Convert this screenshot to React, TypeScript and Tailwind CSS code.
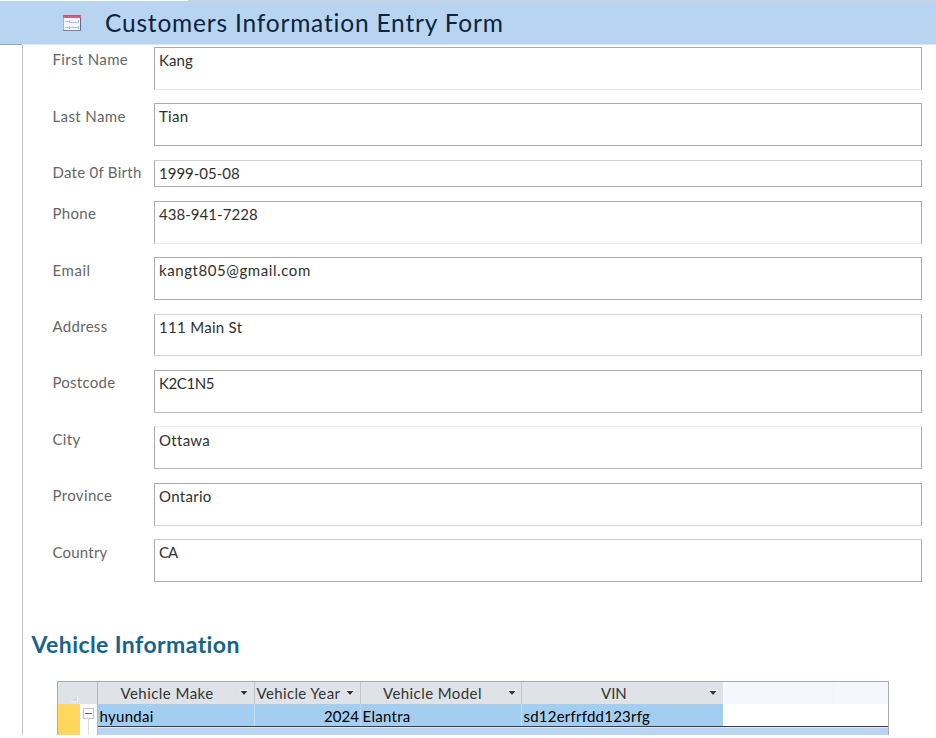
const fields = [
  { label: 'First Name', value: 'Kang', row: 'h-[56px]', box: 'h-[43px] pt-[3px]', ls: 'pt-[3px] tracking-[0.35px]', vs: 'tracking-[0.1px]', edge: 'border-b-[#e6e6e6]' },
  { label: 'Last Name', value: 'Tian', row: 'h-[57px]', box: 'h-[43px] pt-[3px]', ls: 'pt-[4px] tracking-[0.4px]', vs: 'tracking-[0.3px]', edge: 'border-b-[#ababab]' },
  { label: 'Date 0f Birth', value: '1999-05-08', row: 'h-[41px]', box: 'h-[27px] pt-[3px]', ls: 'pt-[3px] tracking-[0.27px]', vs: 'tracking-[0px]', edge: 'border-t-[#cfcfcf]' },
  { label: 'Phone', value: '438-941-7228', row: 'h-[56px]', box: 'h-[43px] pt-[3px]', ls: 'pt-[3px] tracking-[0.3px]', vs: 'tracking-[0.04px]', edge: 'border-b-[#e9e9e9]' },
  { label: 'Email', value: 'kangt805@gmail.com', row: 'h-[57px]', box: 'h-[43px] pt-[3px]', ls: 'pt-[4px] tracking-[0.55px]', vs: 'tracking-[0.58px]', edge: 'border-b-[#ababab]' },
  { label: 'Address', value: '111 Main St', row: 'h-[56px]', box: 'h-[42px] pt-[3px]', ls: 'pt-[3px] tracking-[0.3px]', vs: 'tracking-[0.3px]', edge: 'border-t-[#d6d6d6] border-b-[#d6d6d6]' },
  { label: 'Postcode', value: 'K2C1N5', row: 'h-[56px]', box: 'h-[43px] pt-[3px]', ls: 'pt-[3px] tracking-[0.25px]', vs: 'tracking-[-0.4px]', edge: 'border-b-[#bdbdbd]' },
  { label: 'City', value: 'Ottawa', row: 'h-[57px]', box: 'h-[43px] pt-[4px]', ls: 'pt-[4px] tracking-[0.35px]', vs: 'tracking-[0.3px]', edge: 'border-t-[#eeeeee] border-b-[#b5b5b5]' },
  { label: 'Province', value: 'Ontario', row: 'h-[56px]', box: 'h-[43px] pt-[3px]', ls: 'pt-[3px] tracking-[0.35px]', vs: 'tracking-[0.3px]', edge: 'border-b-[#d6d6d6]' },
  { label: 'Country', value: 'CA', row: 'h-[56px]', box: 'h-[43px] pt-[3px]', ls: 'pt-[4px] tracking-[0.2px]', vs: 'tracking-[-1px]', edge: 'border-t-[#c8c8c8]' },
];

function FormIcon() {
  return (
    <svg width="19" height="18" viewBox="0 0 19 18" shapeRendering="crispEdges">
      <rect x="0" y="0" width="18" height="16" fill="#a9b3c6" />
      <rect x="17" y="1" width="1" height="15" fill="#5a6c89" />
      <rect x="0" y="15" width="18" height="1" fill="#7987a0" />
      <rect x="1" y="3" width="16" height="12" fill="#f4f5f9" />
      <rect x="0" y="0" width="18" height="3" fill="#cc6480" />
      <rect x="1" y="0" width="16" height="1" fill="#b95a76" />
      <path d="M2 6.5h4M2 12.5h4M6.5 5v3M6 7.5h10M15.5 5v3M6.5 11v3M6 12.5h10M15.5 11v3" fill="none" stroke="#b0c4df" />
    </svg>
  );
}

function Arrow() {
  return (
    <svg className="shrink-0" width="10" height="6" viewBox="0 0 10 6">
      <path d="M0 0h10L5 6z" fill="#f8f9fb" />
      <path d="M1.5 1h7L5 5z" fill="#303640" />
    </svg>
  );
}

const columns = [
  { name: 'Vehicle Make', cell: 'w-[157px] border-r pl-[22.5px] pr-[5px]', ls: 'tracking-[0.45px]' },
  { name: 'Vehicle Year', cell: 'w-[106px] border-r pl-[1.5px] pr-[5px]', ls: 'tracking-[0.37px]' },
  { name: 'Vehicle Model', cell: 'w-[161px] border-r pl-[22px] pr-[4px]', ls: 'tracking-[0.42px]' },
  { name: 'VIN', cell: 'w-[201px] pl-[79px] pr-[5px]', ls: 'tracking-[0px]' },
];

export default function App() {
  return (
    <div className="flex h-[738px] w-[936px] flex-col overflow-hidden bg-white font-[Lato,'Open_Sans',sans-serif] text-[15px] whitespace-nowrap">
      <div className="flex h-px bg-[#d4d0d0]"><div className="w-[188px] bg-white" /></div>
      <header className="flex h-[43px] items-center bg-[#b8d4f1] pl-[63px]">
        <div className="flex w-[42px] pt-[3px]"><FormIcon /></div>
        <h1 className="text-[24.5px] leading-[30px] tracking-[0.81px] text-[#0b2440]">Customers Information Entry Form</h1>
      </header>
      <div className="flex h-px bg-[#d6e7f7]"><div className="w-[22px] bg-[#8ba9cc]" /></div>
      <div className="flex h-[690px]">
        <div className="w-[23px] shrink-0 border-r border-[#c3c3c3]" />
        <main className="min-w-0 flex-1 pt-[2px]">
          <div>
            {fields.map((f) => (
              <div key={f.label} className={`flex items-start ${f.row}`}>
                <label className={`w-[131px] shrink-0 pl-[29.5px] leading-[18px] text-[#666666] ${f.ls}`}>{f.label}</label>
                <div className={`w-[768px] border border-[#ababab] pl-[4px] leading-[18px] text-[#303030] ${f.edge} ${f.box} ${f.vs}`}>{f.value}</div>
              </div>
            ))}
          </div>
          <h2 className="mt-[34px] h-[52px] pl-[8.5px] text-[23px] leading-[30px] font-bold tracking-[0.42px] text-[#17638a]">Vehicle Information</h2>
          <section className="ml-[34px] h-[54px] w-[832px] border-t border-r border-l border-[#ababab] text-[#333333]">
            <div className="flex h-[22px] bg-[#f6f7fe]">
              <div className="flex w-[40px] items-end justify-end border-r border-[#b5b8bc] bg-[#dfe3e8] pr-[19px] pb-[2px]">
                <svg width="7" height="6"><path d="M0 6L7 0v6z" fill="#d0dae7" /><path d="M0 5.5h6.5V0" fill="none" stroke="#eef3f9" /></svg>
              </div>
              {columns.map((c) => (
                <div key={c.name} className={`flex items-center justify-between border-[#c1c5ca] bg-[#dfe3e8] ${c.cell} ${c.ls}`}>
                  <span className="leading-[20px]">{c.name}</span>
                  <Arrow />
                </div>
              ))}
              <div className="ml-[110px] w-px bg-[#f1f3fa]" />
            </div>
            <div className="flex h-[31px]">
              <div className="w-[22px] bg-[#ffd75e]" />
              <div className="flex w-[18px] flex-col items-center border-r border-[#b5b8bc] pt-[4px] pr-px pl-px">
                <div className="flex h-[11px] w-[11px] shrink-0 items-center justify-center border border-[#c0c3c8] bg-white"><div className="h-px w-[7px] bg-[#666666]" /></div>
                <div className="w-px flex-1 bg-[#dedede]" />
              </div>
              <div className="flex flex-1 flex-col">
                <div className="flex h-[22px] leading-[24px] text-black">
                  <div className="w-[157px] border-r border-[#c3def2] bg-[#a4cef0] pl-[1.5px] tracking-[0.3px]">hyundai</div>
                  <div className="w-[106px] border-r border-[#b5d8f3] bg-[#a4cef0] pr-px text-right tracking-[0.05px]">2024</div>
                  <div className="w-[161px] border-r border-[#c3def2] bg-[#a4cef0] pl-[1.5px] tracking-[0.3px]">Elantra</div>
                  <div className="w-[201px] bg-[#a4cef0] pl-[1.5px] tracking-[0.23px]">sd12erfrfdd123rfg</div>
                </div>
                <div className="h-px bg-[#403a3e]" />
                <div className="h-px bg-[#dce8f5]" />
                <div className="flex-1 bg-[#b8d4f1]" />
              </div>
            </div>
          </section>
        </main>
      </div>
    </div>
  );
}
